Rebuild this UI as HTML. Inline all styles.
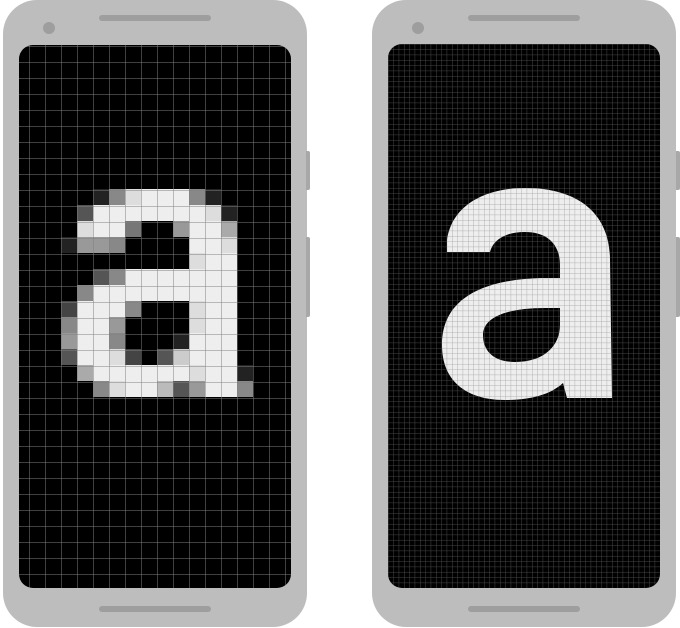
<!DOCTYPE html>
<html><head><meta charset="utf-8"><style>
html,body{margin:0;padding:0;background:#fff;width:680px;height:628px;overflow:hidden;position:relative}
.ph{position:absolute;top:0;width:304px;height:627px;background:#bdbdbd;border-radius:34px}
.bar{position:absolute;height:6px;width:112px;left:96px;background:#9e9e9e;border-radius:3px}
.cam{position:absolute;left:40px;top:22px;width:12px;height:12px;border-radius:50%;background:#9e9e9e}
.scr{position:absolute;left:16px;top:45px;width:272px;height:543px;background:#000;border-radius:14px;overflow:hidden}
.btn{position:absolute;width:4px;background:#a8a8a8;border-radius:0 2px 2px 0}
.g{position:absolute;left:42px;top:144px;display:grid;grid-template-columns:repeat(12,16px);grid-template-rows:repeat(13,16px)}
.g i{display:block}
.a{background:#aaa}.b{background:#bbb}.c{background:#ccc}.d{background:#ddd}.e{background:#eee}
.k2{background:#222}.k4{background:#444}.k5{background:#555}.k7{background:#777}.k8{background:#888}.k9{background:#999}
.grid1{position:absolute;inset:0;background-image:repeating-linear-gradient(90deg,rgba(128,128,128,.5) 0 1px,transparent 1px 16px),repeating-linear-gradient(180deg,rgba(128,128,128,.5) 0 1px,transparent 1px 16px);background-position:10px 1px}
</style></head><body>
<div class="ph" style="left:3px">
 <div class="bar" style="top:15px"></div>
 <div class="bar" style="top:606px"></div>
 <div class="cam"></div>
 <div class="scr">
  <div class="g">
<i></i><i></i><i class=k2></i><i class=k8></i><i class=d></i><i class=e></i><i class=e></i><i class=e></i><i class=k8></i><i class=k2></i><i></i><i></i>
<i></i><i class=k5></i><i class=e></i><i class=e></i><i class=e></i><i class=e></i><i class=e></i><i class=e></i><i class=e></i><i class=d></i><i class=k2></i><i></i>
<i></i><i class=d></i><i class=e></i><i class=e></i><i class=k7></i><i></i><i></i><i class=k9></i><i class=e></i><i class=e></i><i class=a></i><i></i>
<i class=k2></i><i class=k9></i><i class=k9></i><i class=k8></i><i></i><i></i><i></i><i></i><i class=e></i><i class=e></i><i class=d></i><i></i>
<i></i><i></i><i></i><i></i><i></i><i></i><i></i><i></i><i class=d></i><i class=e></i><i class=e></i><i></i>
<i></i><i></i><i class=k5></i><i class=k8></i><i class=e></i><i class=e></i><i class=e></i><i class=e></i><i class=e></i><i class=e></i><i class=e></i><i></i>
<i></i><i class=k8></i><i class=e></i><i class=e></i><i class=e></i><i class=e></i><i class=e></i><i class=e></i><i class=e></i><i class=e></i><i class=e></i><i></i>
<i class=k4></i><i class=e></i><i class=e></i><i class=e></i><i class=k8></i><i></i><i></i><i></i><i class=d></i><i class=e></i><i class=e></i><i></i>
<i class=k8></i><i class=e></i><i class=e></i><i class=k9></i><i></i><i></i><i></i><i></i><i class=d></i><i class=e></i><i class=e></i><i></i>
<i class=k9></i><i class=e></i><i class=e></i><i class=k8></i><i></i><i></i><i></i><i class=k2></i><i class=e></i><i class=e></i><i class=e></i><i></i>
<i class=k5></i><i class=e></i><i class=e></i><i class=d></i><i class=k4></i><i></i><i class=k5></i><i class=c></i><i class=e></i><i class=e></i><i class=e></i><i></i>
<i></i><i class=a></i><i class=e></i><i class=e></i><i class=e></i><i class=e></i><i class=e></i><i class=e></i><i class=d></i><i class=e></i><i class=e></i><i class=k2></i>
<i></i><i></i><i class=k8></i><i class=d></i><i class=e></i><i class=e></i><i class=b></i><i class=k5></i><i class=k9></i><i class=e></i><i class=e></i><i class=k8></i>
  </div>
  <div class="grid1"></div>
 </div>
</div>
<div class="btn" style="left:306px;top:151px;height:39px"></div>
<div class="btn" style="left:306px;top:237px;height:80px"></div>

<div class="ph" style="left:372px">
 <div class="bar" style="top:15px"></div>
 <div class="bar" style="top:606px"></div>
 <div class="cam"></div>
 <div class="scr" style="top:44px;height:544px">
  <svg width="272" height="544" style="position:absolute;left:0;top:0">
   <defs><pattern id="p" x="0" y="0" width="5.333" height="5.333" patternUnits="userSpaceOnUse">
    <path d="M0 0H5.333M0 0V5.333" stroke="rgba(128,128,128,.55)" stroke-width="1" fill="none"/></pattern></defs>
   <g transform="translate(-388,-44)">
    <path fill="#eee" fill-rule="evenodd" d="M447,252 L447,240 C452,205 485,188 525,188 C580,188 610,215 610,260 L612,398 L567,398 L563,383 C550,395 530,400 505,400 C465,400 442,380 442,345 C442,300 480,280 540,278 L560,278 L560,265 C560,245 548,232 525,232 C505,232 493,240 490,252 Z M560,308 L545,308 C505,308 483,318 483,335 C483,352 495,362 515,362 C545,362 560,345 560,325 Z"/>
   </g>
   <rect width="272" height="544" fill="url(#p)"/>
  </svg>
 </div>
</div>
<div class="btn" style="left:676px;top:151px;height:39px"></div>
<div class="btn" style="left:676px;top:237px;height:80px"></div>
</body></html>
